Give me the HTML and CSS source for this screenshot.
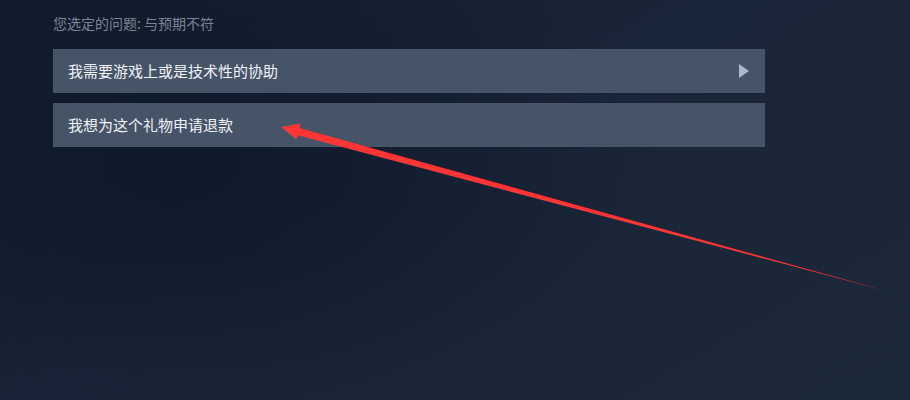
FILE: index.html
```html
<!DOCTYPE html>
<html lang="zh-CN">
<head>
<meta charset="utf-8">
<title>Steam 客服</title>
<link rel="stylesheet" href="styles.css">
</head>
<body>
<main class="page">
  <div class="selected">您选定的问题: 与预期不符</div>
  <div class="options">
    <a class="option">
      <span class="label">我需要游戏上或是技术性的协助</span>
      <svg class="chev" width="10" height="14" viewBox="0 0 10 14"><polygon points="0,0 10,7 0,14" fill="#a9b8cd"/></svg>
    </a>
    <a class="option">
      <span class="label">我想为这个礼物申请退款</span>
    </a>
  </div>
</main>
<svg class="annot" width="910" height="400" viewBox="0 0 910 400">
  <polygon fill="#fe3535" points="281,127 300.5,123.6 299.3,128.1 890,292 297.6,135.2 296.3,139.6"/>
</svg>
</body>
</html>
```
FILE: styles.css
```css
html, body {
  margin: 0;
  padding: 0;
}
body {
  width: 910px;
  height: 400px;
  overflow: hidden;
  position: relative;
  font-family: "Noto Sans CJK SC", "Noto Sans", Arial, sans-serif;
  background:
    radial-gradient(ellipse 480px 260px at 180px 170px, rgba(13,24,42,0.9) 0%, rgba(13,24,42,0) 100%),
    linear-gradient(150deg, #121c2c 0%, #192538 45%, #1c2939 100%);
}
.page {
  padding: 13px 0 0 53px;
  width: 712px;
}
.selected {
  font-size: 14px;
  line-height: 20px;
  color: #7b8695;
  margin-bottom: 16px;
}
.options {
  display: flex;
  flex-direction: column;
  gap: 10px;
}
.option {
  display: flex;
  align-items: center;
  justify-content: space-between;
  height: 44px;
  padding: 0 16px 0 15px;
  background: #465468;
  color: #f0f3f7;
  font-size: 15px;
  font-weight: 400;
  text-decoration: none;
}
.label {
  line-height: 20px;
}
.chev {
  display: block;
}
.annot {
  position: absolute;
  left: 0;
  top: 0;
  pointer-events: none;
}
```
